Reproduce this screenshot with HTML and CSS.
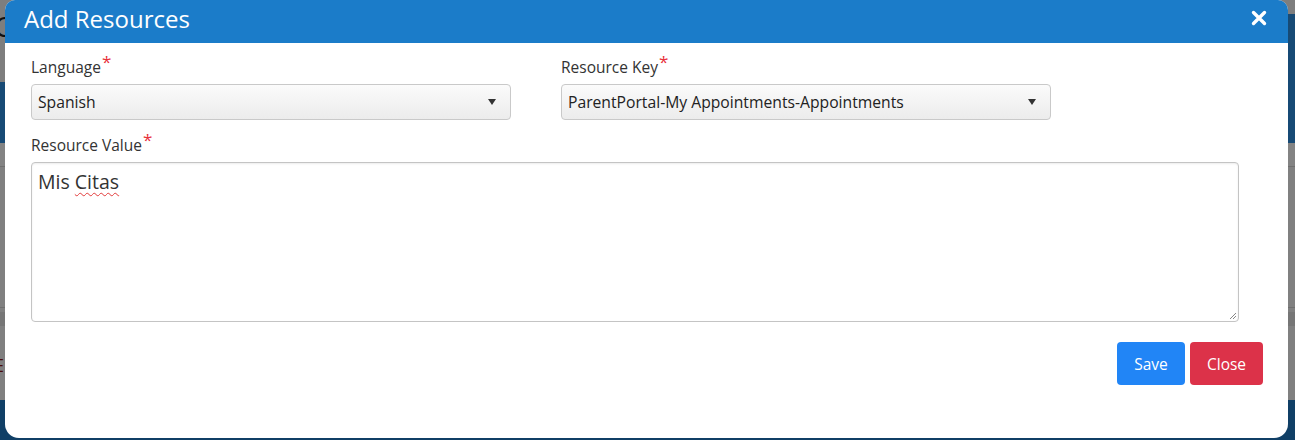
FILE: index.html
```html
<!DOCTYPE html>
<html>
<head>
<meta charset="utf-8">
<link rel="stylesheet" href="styles.css">
</head>
<body>
<div class="page">
  <div class="bg bg-top"><span class="bg-letter">C</span></div>
  <div class="bg bg-band"></div>
  <div class="bg bg-gray1"></div>
  <div class="bg bg-line"></div>
  <div class="bg bg-gray2"></div>
  <div class="bg bg-line"></div>
  <div class="bg bg-gray3"></div>
  <div class="bg bg-mid"></div>
  <div class="bg bg-gray4"><span class="bg-letter red">E</span></div>
  <div class="bg bg-bottom"></div>
</div>

<div class="modal">
  <div class="modal-header">
    <h4 class="modal-title">Add Resources</h4>
    <span class="close">
      <svg width="16" height="16" viewBox="0 0 16 16"><path d="M2.5 2.5 L13.5 13.5 M13.5 2.5 L2.5 13.5" stroke="#fff" stroke-width="3.4" stroke-linecap="round"/></svg>
    </span>
  </div>
  <div class="modal-body">
    <div class="row">
      <div class="field col-lang">
        <label class="lbl">Language<span class="req">*</span></label>
        <div class="select"><span>Spanish</span><span class="caret"></span></div>
      </div>
      <div class="field col-key">
        <label class="lbl">Resource Key<span class="req">*</span></label>
        <div class="select"><span>ParentPortal-My Appointments-Appointments</span><span class="caret"></span></div>
      </div>
    </div>
    <div class="field">
      <label class="lbl">Resource Value<span class="req">*</span></label>
      <div class="textarea">Mis <span class="spell">Citas</span>
        <svg class="grip" width="9" height="9" viewBox="0 0 9 9"><path d="M8 2 L2 8 M8 5 L5 8" stroke="#888" stroke-width="1"/></svg>
      </div>
    </div>
    <div class="actions">
      <button class="btn btn-save">Save</button>
      <button class="btn btn-close">Close</button>
    </div>
  </div>
</div>
</body>
</html>
```

FILE: styles.css
```css
html, body {
  margin: 0;
  padding: 0;
  width: 1295px;
  height: 440px;
  overflow: hidden;
  background: #808080;
  font-family: "Segoe UI", "Open Sans", "Noto Sans", sans-serif;
}

.page {
  display: flex;
  flex-direction: column;
  width: 1295px;
  height: 440px;
}
.bg { width: 100%; flex: none; position: relative; }
.bg-top { height: 82px; background: #7e7e7e; }
.bg-top::after {
  content: "";
  position: absolute;
  right: 0;
  top: 14px;
  width: 12px;
  height: 68px;
  background: #174a75;
}
.bg-band { height: 61px; background: #174a75; }
.bg-gray1 { height: 23px; background: #838383; }
.bg-line { height: 1px; background: #6f6f6f; }
.bg-gray2 { height: 140px; background: #808080; }
.bg-gray3 { height: 4px; background: #808080; }
.bg-mid { height: 14px; background: #767676; }
.bg-gray4 { height: 74px; background: #808080; }
.bg-bottom { flex: 1; background: #103f66; }
.bg-letter {
  position: absolute;
  left: -6px;
  top: 12px;
  font-size: 28px;
  line-height: 1;
  color: #111;
}
.bg-letter.red { color: #4a0a0a; top: 30px; font-size: 18px; left: -6px; }

.modal {
  position: absolute;
  left: 5px;
  top: 0;
  width: 1283px;
  height: 438px;
  background: #fff;
  border-radius: 10px 10px 14px 14px;
  overflow: hidden;
  display: flex;
  flex-direction: column;
}

.modal-header {
  height: 43px;
  background: #1b7cc9;
  display: flex;
  align-items: center;
  justify-content: space-between;
  padding: 0 21px 0 19px;
  box-sizing: border-box;
}
.modal-title {
  margin: 0;
  color: #fff;
  font-weight: 400;
  font-size: 24px;
  line-height: 1;
  padding-bottom: 5px;
}
.close { display: flex; margin-top: -8px; }

.modal-body {
  padding: 14px 0 0 26px;
}
.row {
  display: flex;
  gap: 50px;
}
.col-lang { width: 480px; }
.col-key { width: 490px; }

.field { display: flex; flex-direction: column; }
.lbl {
  font-size: 15.5px;
  color: #333;
  line-height: 20px;
  margin-bottom: 7px;
}
.req {
  color: #e8303a;
  font-size: 17px;
  position: relative;
  top: -5px;
  margin-left: 1px;
}

.select {
  height: 36px;
  box-sizing: border-box;
  border: 1px solid #c9c9c9;
  border-radius: 4px;
  background: linear-gradient(#fbfbfb, #ececec);
  display: flex;
  align-items: center;
  justify-content: space-between;
  padding: 0 14px 0 6px;
  font-size: 15.7px;
  color: #222;
}
.caret {
  width: 0;
  height: 0;
  border-left: 4px solid transparent;
  border-right: 4px solid transparent;
  border-top: 6px solid #333;
}

.row + .field { margin-top: 15px; }

.textarea {
  position: relative;
  width: 1208px;
  height: 160px;
  box-sizing: border-box;
  border: 1px solid #c4c4c4;
  border-radius: 4px;
  box-shadow: inset 0 1px 2px rgba(0,0,0,0.08);
  padding: 7px 6px;
  font-size: 19.5px;
  color: #333;
  line-height: 24px;
}
.spell {
  text-decoration: underline wavy #e23b3b;
  text-decoration-thickness: 1px;
  text-underline-offset: 3px;
}
.grip { position: absolute; right: 1px; bottom: 1px; }

.actions {
  display: flex;
  justify-content: flex-end;
  gap: 5px;
  margin-top: 20px;
  padding-right: 25px;
}
.btn {
  height: 43px;
  border: none;
  border-radius: 4px;
  color: #fff;
  font-family: inherit;
  font-size: 15.5px;
  padding: 0;
}
.btn-save { background: #2185f6; width: 68px; }
.btn-close { background: #dc3249; width: 73px; }
```
